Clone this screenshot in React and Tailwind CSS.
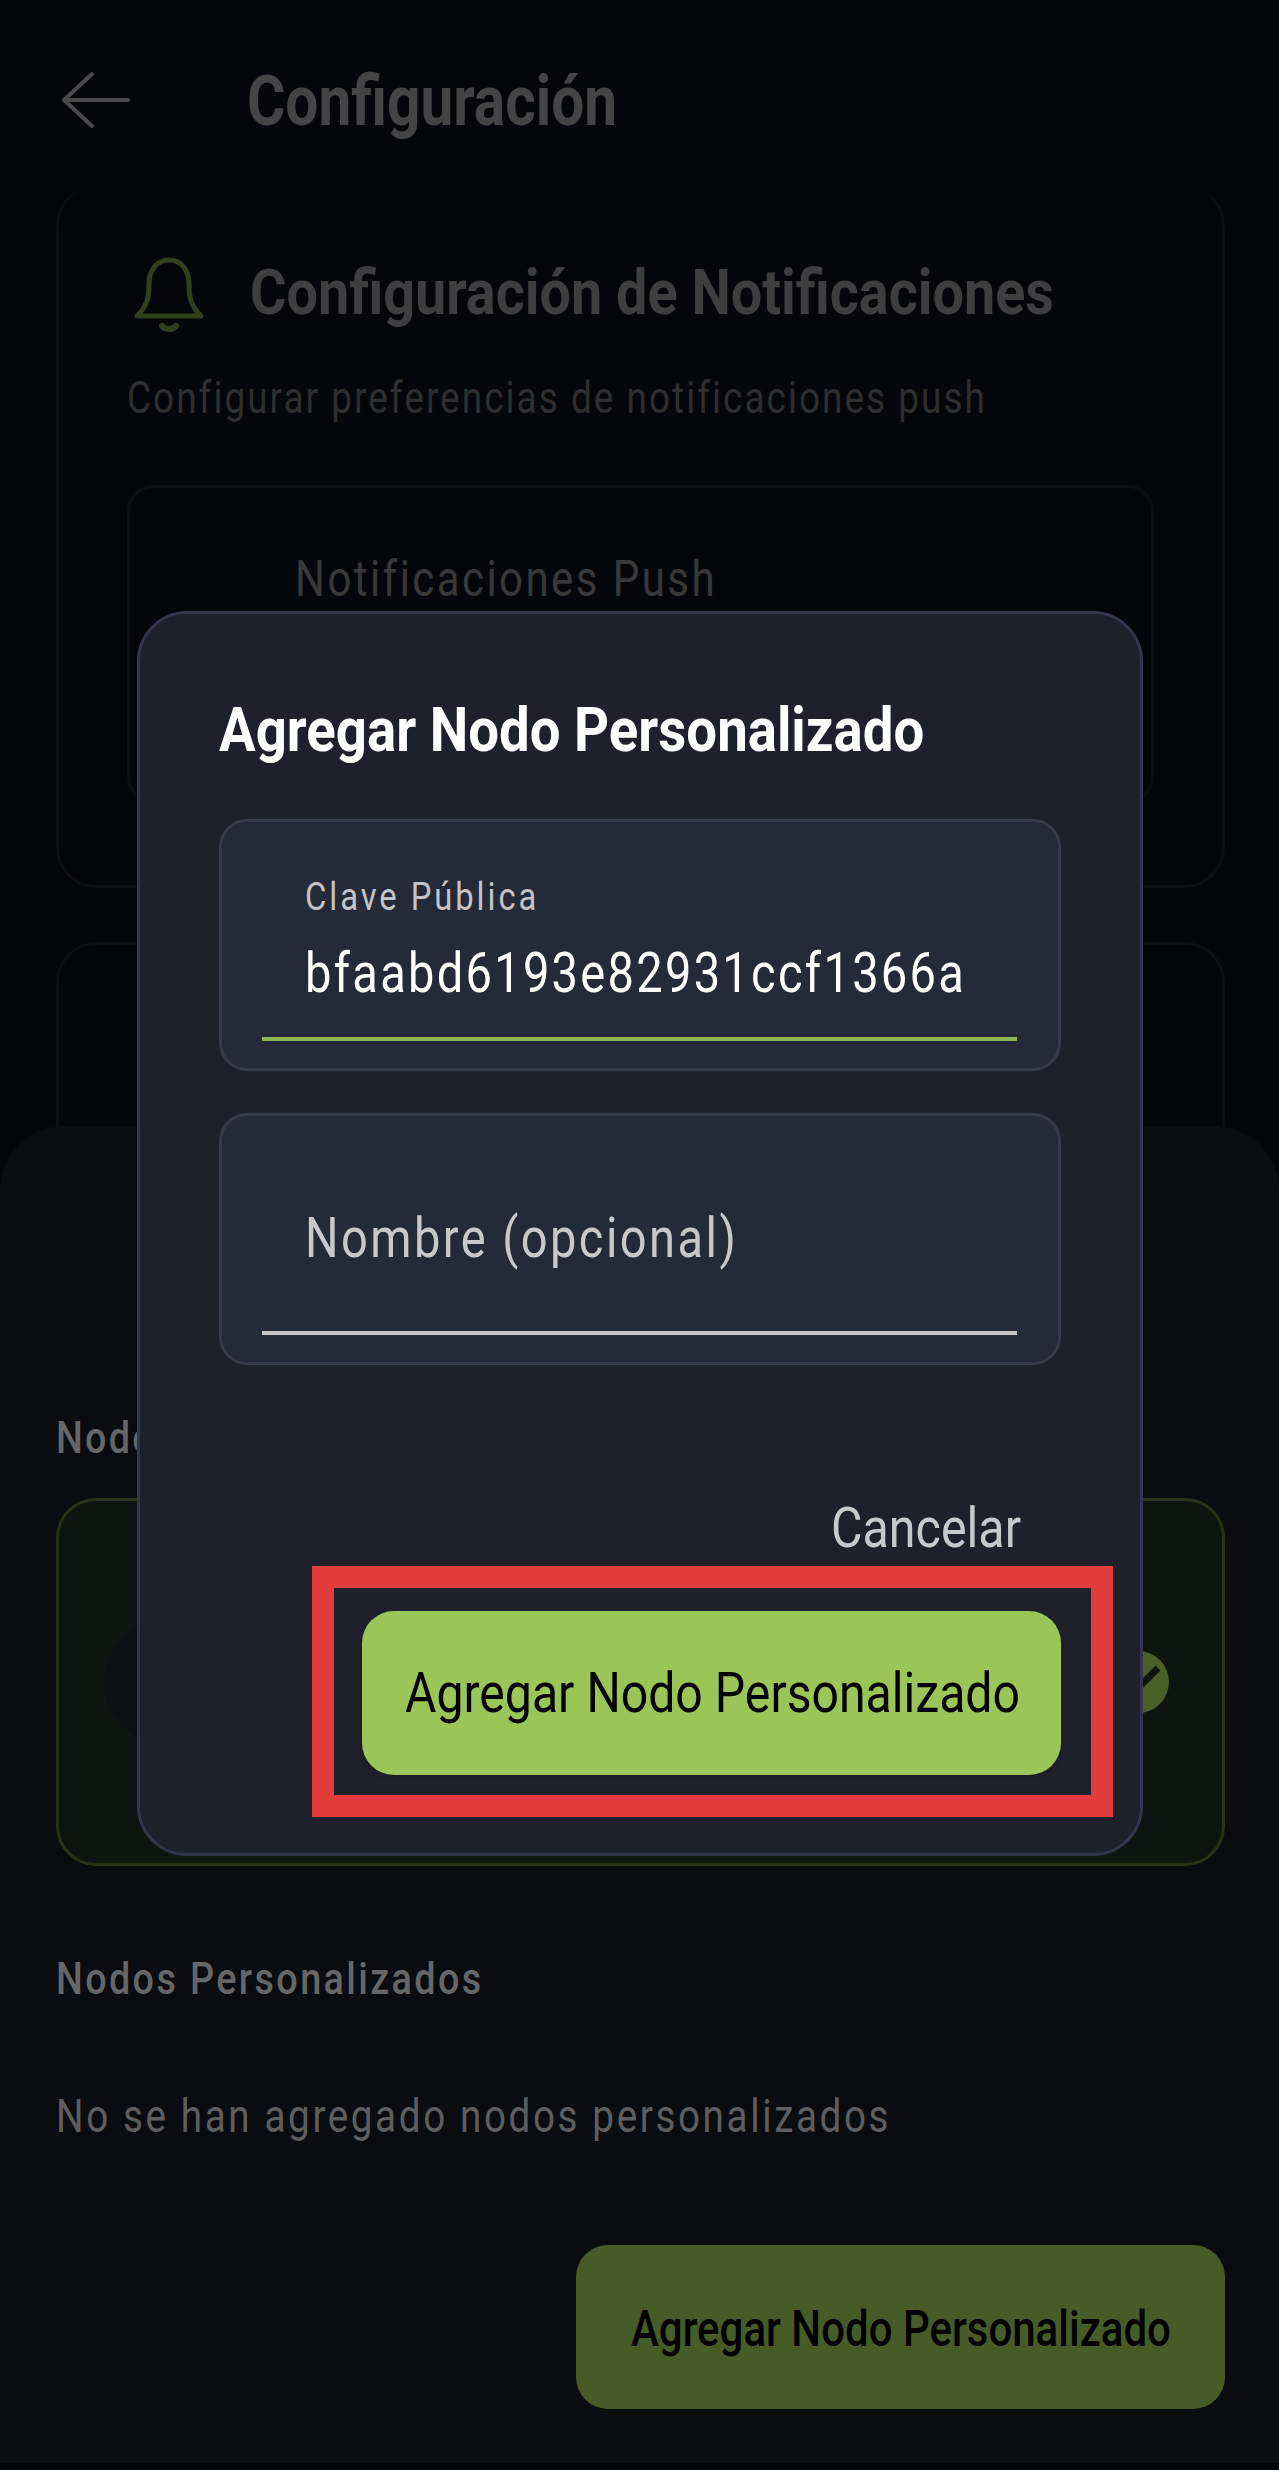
const font = { fontFamily: 'Roboto, sans-serif' }

const Label = ({ className, children }) => (
  <span className={`block whitespace-nowrap origin-left ${className}`}>{children}</span>
)

const Field = ({ focused, children }) => (
  <div className="h-[252px] rounded-[28px] border-[3px] border-[#363a4a] bg-[#252a38] pl-[40px] pr-[41px] flex flex-col">
    <div className="flex-1 relative">{children}</div>
    <div className={`h-[4px] mb-[27px] ${focused ? 'bg-[#8fb650]' : 'bg-[#c8c8cc]'}`} />
  </div>
)

export default function App() {
  return (
    <div style={font} className="relative w-[1279px] h-[2470px] overflow-hidden bg-[#050609]">
      {/* pantalla de fondo */}
      <header className="h-[186px] flex items-start pl-[60px]">
        <svg width="72" height="60" viewBox="0 0 72 60" fill="none" className="mt-[70px] shrink-0 text-[#4a4a4a]">
          <path d="M68 30H4M32 4L4 30l28 26" stroke="currentColor" strokeWidth="4" strokeLinecap="round" strokeLinejoin="round" />
        </svg>
        <Label className="ml-[115px] mt-[60px] scale-x-[0.837] text-[70px] leading-[82px] font-bold text-[#444444]">Configuración</Label>
      </header>

      <section className="ml-[56px] mr-[54px] h-[702px] rounded-[40px] border-[3px] border-t-0 border-[#0c0e12] pl-[68px] pr-[68px]">
        <div className="flex items-start pt-[70px]">
          <svg width="72" height="80" viewBox="0 0 72 80" fill="none" className="ml-[6px] -mt-[2px] text-[#323f1c] shrink-0">
            <path d="M16 30c0-14 8-24 20-24s20 10 20 24c0 14 2 22 12 32H4c10-10 12-18 12-32z" stroke="currentColor" strokeWidth="5" strokeLinejoin="round" />
            <path d="M29 72c3 4 11 4 14 0" stroke="currentColor" strokeWidth="6" strokeLinecap="round" />
          </svg>
          <Label className="ml-[45px] scale-x-[0.885] text-[63px] leading-[74px] font-bold text-[#3e3e3e]">Configuración de Notificaciones</Label>
        </div>
        <Label className="mt-[38px] scale-x-[0.84] text-[44px] leading-[52px] tracking-[2.4px] text-[#2e2e2e]">Configurar preferencias de notificaciones push</Label>
        <div className="mt-[61px] h-[318px] rounded-[26px] border-[3px] border-[#0c0e12] pl-[165px] pt-[62px]">
          <Label className="scale-x-[0.84] text-[50px] leading-[58px] tracking-[2.9px] text-[#383838]">Notificaciones Push</Label>
        </div>
      </section>
      <section className="ml-[56px] mr-[54px] mt-[54px] h-[300px] rounded-[40px] border-[3px] border-[#0c0e12]" />

      {/* hoja inferior */}
      <div className="absolute inset-x-0 top-[1126px] h-[1337px] rounded-t-[64px] bg-[#0a0c10] pl-[56px] pr-[54px]">
        <Label className="mt-[286px] scale-x-[0.84] text-[45px] leading-[52px] tracking-[2.7px] font-medium text-[#666666]">Nodos Disponibles</Label>
        <div className="mt-[34px] h-[368px] rounded-[40px] border-[3px] border-[#2a3319] bg-[#0e1410] flex items-center justify-between pl-[45px] pr-[53px]">
          <div className="w-[126px] h-[126px] rounded-full bg-[#0d1013]" />
          <svg width="62" height="62" viewBox="0 0 62 62">
            <circle cx="31" cy="31" r="31" fill="#485f26" />
            <path d="M15 33l10 10L51 17" fill="none" stroke="#0e1410" strokeWidth="7" />
          </svg>
        </div>
        <Label className="mt-[87px] scale-x-[0.84] text-[45px] leading-[52px] tracking-[2.8px] font-medium text-[#666666]">Nodos Personalizados</Label>
        <Label className="mt-[85px] scale-x-[0.84] text-[46px] leading-[52px] tracking-[3.1px] text-[#5e5e5e]">No se han agregado nodos personalizados</Label>
        <div className="mt-[103px] flex justify-end">
          <div className="w-[649px] h-[164px] rounded-[32px] bg-[#475b27] flex items-center pl-[55px] pt-[4px] overflow-hidden">
            <Label className="scale-x-[0.84] text-[50px] leading-[58px] font-medium text-black">Agregar Nodo Personalizado</Label>
          </div>
        </div>
      </div>

      {/* diálogo */}
      <div className="absolute left-[137px] top-[611px] w-[1006px] h-[1245px] rounded-[50px] border-[3px] border-[#33364a] bg-[#1e202c] px-[79px] flex flex-col">
        <Label className="mt-[80px] scale-x-[0.88] text-[62px] leading-[72px] font-bold text-white">Agregar Nodo Personalizado</Label>
        <div className="mt-[53px] flex flex-col gap-[42px]">
          <Field focused>
            <Label className="absolute left-[43px] top-[53px] scale-x-[0.84] text-[39px] leading-[44px] tracking-[3.5px] text-[#c4c4c8]">Clave Pública</Label>
            <Label className="absolute left-[43px] top-[118px] scale-x-[0.84] text-[56px] leading-[66px] tracking-[2.7px] text-white">bfaabd6193e82931ccf1366a</Label>
          </Field>
          <Field>
            <Label className="absolute left-[43px] top-[89px] scale-x-[0.84] text-[56px] leading-[66px] tracking-[2.9px] text-[#c8c8cc]">Nombre (opcional)</Label>
          </Field>
        </div>
        <Label className="mt-[133px] ml-[612px] scale-x-[0.88] text-[55px] leading-[60px] text-[#c8c8cc]">Cancelar</Label>
        <div className="mt-[8px] ml-[93px] w-[801px] h-[251px] shrink-0 border-[22px] border-[#e23c3c] pl-[28px] pr-[30px] pt-[23px]">
          <div className="h-[164px] rounded-[32px] bg-[#9bc556] shadow-md flex items-center pl-[43px] overflow-hidden">
            <Label className="scale-x-[0.86] text-[56px] leading-[64px] text-black">Agregar Nodo Personalizado</Label>
          </div>
        </div>
      </div>
    </div>
  )
}
